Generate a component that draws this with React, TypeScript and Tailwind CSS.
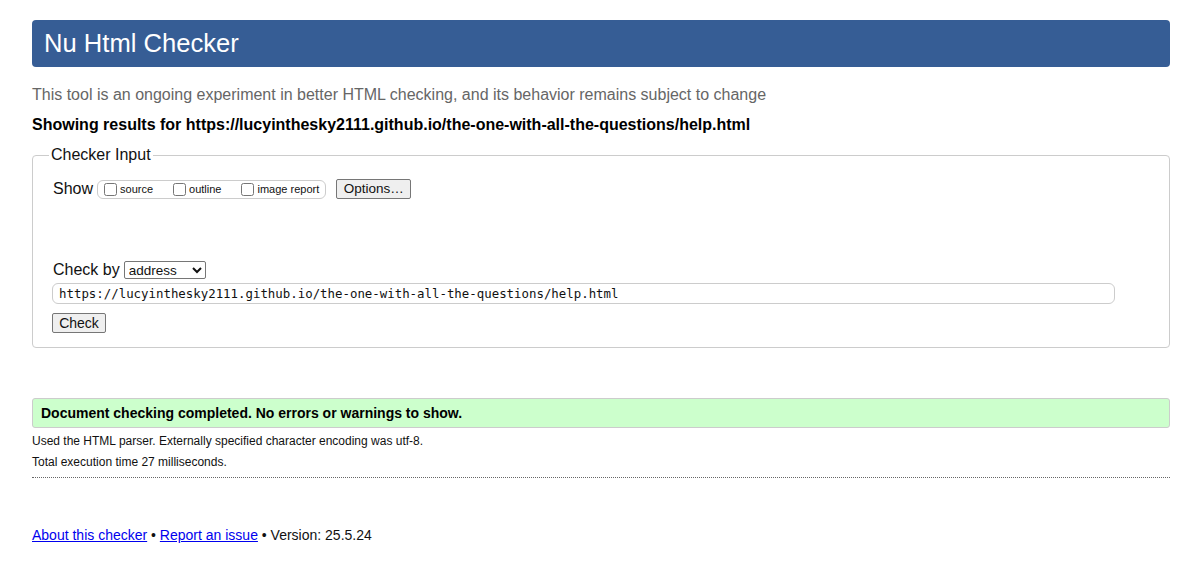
import React from 'react';

const url = 'https://lucyinthesky2111.github.io/the-one-with-all-the-questions/help.html';

export default function App() {
  return (
    <div className="min-h-[565px] bg-white pl-8 pr-4 pt-5 font-['Liberation_Sans',Arial,sans-serif] text-[#111]">
      {/* Title bar */}
      <h1 className="flex h-[47px] items-center rounded-[4px] bg-[#365d95] px-3 text-[25.6px] text-white">
        Nu Html Checker
      </h1>

      <p className="mt-[19px] text-[16px] leading-[18px] text-[#666]">
        This tool is an ongoing experiment in better HTML checking, and its behavior remains subject to change
      </p>
      <p className="mt-[12px] text-[16px] font-bold leading-[18px] text-black">
        Showing results for {url}
      </p>

      {/* Checker input */}
      <fieldset className="mt-[12px] rounded-[4px] border border-[#ccc] pb-[12px] pl-5 pr-[53px]">
        <legend className="-ml-1 px-[2px] text-[16px] leading-[18px]">Checker Input</legend>

        <div className="mt-[13px] flex items-center text-[16px]">
          <span>Show</span>
          <span className="ml-1 flex h-[19px] items-center rounded-[6px] border border-[#ccc] pl-[6px] pr-[6px] text-[11px]">
            <label className="flex items-center">
              <input type="checkbox" className="m-0 mr-[3px] h-[13px] w-[13px]" />
              source
            </label>
            <label className="ml-[20px] flex items-center">
              <input type="checkbox" className="m-0 mr-[3px] h-[13px] w-[13px]" />
              outline
            </label>
            <label className="ml-[20px] flex items-center">
              <input type="checkbox" className="m-0 mr-[3px] h-[13px] w-[13px]" />
              image report
            </label>
          </span>
          <button className="ml-[10px] h-[20px] w-[75px] rounded-[2px] border border-[#767676] bg-[#efefef] text-[13.5px] leading-none">
            Options…
          </button>
        </div>

        <div className="mt-[59px] flex h-[19px] items-center text-[16px]">
          <span>Check by</span>
          <select
            defaultValue="address"
            className="ml-1 h-[18px] w-[82px] rounded-[2px] border border-[#767676] bg-white py-0 text-[13.5px] leading-none"
          >
            <option value="address">address</option>
            <option value="file">file upload</option>
            <option value="text">text input</option>
          </select>
        </div>

        <input
          type="text"
          defaultValue={url}
          className="-ml-px mt-[4px] block h-[21px] w-full rounded-[6px] border border-[#ccc] px-[6px] font-['DejaVu_Sans_Mono',monospace] text-[12.4px]"
        />

        <button className="-ml-px mt-[9px] h-[20px] w-[54px] rounded-[2px] border border-[#767676] bg-[#efefef] text-[14px] leading-none">
          Check
        </button>
      </fieldset>

      {/* Result */}
      <div className="mt-[50px] flex h-[30px] items-center rounded-[3px] border border-[#ccc] bg-[#ccffcc] px-2 text-[14px] font-bold text-black">
        Document checking completed. No errors or warnings to show.
      </div>
      <p className="mt-[3px] text-[12px] leading-[21px]">
        Used the HTML parser. Externally specified character encoding was utf-8.
      </p>
      <p className="text-[12px] leading-[21px]">Total execution time 27 milliseconds.</p>
      <hr className="mt-[4px] border-t border-dotted border-[#666]" />

      {/* Footer */}
      <p className="mt-[49px] text-[14px] leading-[16px]">
        <a href="#" className="text-[#0000ee] underline">About this checker</a>
        {' • '}
        <a href="#" className="text-[#0000ee] underline">Report an issue</a>
        {' • Version: 25.5.24'}
      </p>
    </div>
  );
}
